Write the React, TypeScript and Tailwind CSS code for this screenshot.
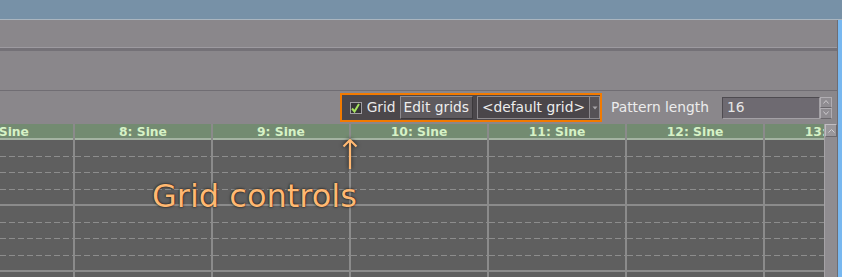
import React from 'react';

const columns = [7, 8, 9, 10, 11, 12, 13];
const rows = ['dash', 'dash', 'dash', 'solid', 'dash', 'dash', 'dash', 'solid', 'dash'];

const GridColumn: React.FC<{ index: number }> = ({ index }) => (
  <div className="w-[138px] shrink-0 flex flex-col border-r-2 border-[#8b8b8b]">
    <div className="h-[20px] pt-[2px] bg-[#738b71] border-b-2 border-[#a4b3a2] flex items-center justify-center text-[12.3px] font-bold text-[#d6f2c6] leading-none">
      {index}: Sine
    </div>
    {rows.map((kind, i) => (
      <div key={i} className="h-[16.5px] shrink-0 flex flex-col justify-end">
        {kind === 'dash' ? (
          <div className="h-px bg-[repeating-linear-gradient(90deg,#8d8d8d_0_6px,transparent_6px_9px)]" />
        ) : (
          <div className="h-[2px] bg-[#8b8b8b]" />
        )}
      </div>
    ))}
  </div>
);

export default function App() {
  return (
    <div className="w-[842px] h-[277px] overflow-hidden flex flex-col bg-[#8a878b] font-['DejaVu_Sans',sans-serif] relative">
      {/* Title strip */}
      <div className="h-[20px] shrink-0 bg-[#7791a7] border-b border-[#aab5bf]" />

      <div className="flex flex-1 min-h-0">
        <div className="w-[838px] flex flex-col border-r border-[#6f6d72]">
          {/* Empty panels */}
          <div className="h-[31px] shrink-0 border-b-[3px] border-[#747177] shadow-[inset_0_-1px_0_#9d9aa0]" />
          <div className="h-[40px] shrink-0 border-b border-[#706d73]" />

          {/* Toolbar */}
          <div className="h-[33px] shrink-0 flex items-center justify-end pr-[5px]">
            <div className="h-[29px] flex items-center border-2 border-[#f27a00] bg-[#4b474b] pl-[8px] pr-0">
              <div className="w-[12px] h-[12px] bg-[#353336] border border-[#a09da2] flex items-center justify-center">
                <svg width="9" height="10" viewBox="0 0 9 10">
                  <path d="M1 5.5 L3.5 8.5 L8 1" fill="none" stroke="#a6e35e" strokeWidth="2" />
                </svg>
              </div>
              <span className="ml-[5px] text-[13.8px] text-[#e9e9e9]">Grid</span>
              <div className="ml-[4px] h-[23px] px-[3px] flex items-center bg-[#5e5a5e] border border-[#3c393c] border-t-[#8d8a8e] border-l-[#8d8a8e] text-[13.8px] text-[#ededed]">
                Edit grids
              </div>
              <div className="ml-[4px] h-[23px] flex items-center border border-[#8b888c] bg-[#4a464a]">
                <span className="pl-[4px] pr-[4px] text-[13.8px] text-[#ededed]">&lt;default grid&gt;</span>
                <div className="w-[10px] h-full border-l border-[#8b888c] bg-[#565256] flex items-center justify-center">
                  <svg width="6" height="4" viewBox="0 0 6 4">
                    <path d="M0.5 0.5 L5.5 0.5 L3 3.5 Z" fill="#a7a4a8" />
                  </svg>
                </div>
              </div>
            </div>
            <span className="ml-[9px] text-[13.8px] text-[#ececec]">Pattern length</span>
            <div className="ml-[13px] flex">
              <div className="w-[98px] h-[22px] flex items-center px-[4px] bg-[#6e6a71] border border-[#4e4b50] border-b-[#a3a0a5] border-r-[#a3a0a5] text-[13.8px] text-[#e6e6e6]">
                16
              </div>
              <div className="w-[12px] h-[22px] flex flex-col">
                <div className="flex-1 flex items-center justify-center bg-[#8f8c91] border border-[#b0adb2] border-b-[#6a676c]">
                  <svg width="6" height="4" viewBox="0 0 6 4">
                    <path d="M0.5 3.5 L3 0.5 L5.5 3.5" fill="none" stroke="#c9c6cb" strokeWidth="1" />
                  </svg>
                </div>
                <div className="flex-1 flex items-center justify-center bg-[#8f8c91] border border-[#b0adb2] border-b-[#6a676c]">
                  <svg width="6" height="4" viewBox="0 0 6 4">
                    <path d="M0.5 0.5 L3 3.5 L5.5 0.5" fill="none" stroke="#c9c6cb" strokeWidth="1" />
                  </svg>
                </div>
              </div>
            </div>
          </div>

          {/* Pattern grid */}
          <div className="flex flex-1 min-h-0">
            <div className="flex-1 overflow-hidden bg-[#5f5f5f]">
              <div className="flex ml-[-63px] h-full">
                {columns.map((c) => (
                  <GridColumn key={c} index={c} />
                ))}
              </div>
            </div>
            <div className="w-[13px] shrink-0 bg-[#8f8c90] border-l border-[#a5a2a6] flex flex-col">
              <div className="h-[13px] flex items-center justify-center bg-[#9a979b] border border-[#c0bdc1] border-b-[#6c696d] border-r-[#6c696d]">
                <svg width="7" height="4" viewBox="0 0 7 4">
                  <path d="M0.5 3.5 L3.5 0.5 L6.5 3.5" fill="none" stroke="#d0cdd1" strokeWidth="1" />
                </svg>
              </div>
            </div>
          </div>
        </div>
        <div className="flex-1 bg-[#78b8f0]" />
      </div>

      {/* Annotation overlay */}
      <svg
        className="absolute left-[341px] top-[138px] drop-shadow-[0_0_2px_rgba(0,0,0,0.8)]"
        width="18"
        height="33"
        viewBox="0 0 18 33"
      >
        <path d="M9 2 L9 31 M2.5 8.5 L9 2 L15.5 8.5" fill="none" stroke="#ffb872" strokeWidth="2.2" />
      </svg>
      <div className="absolute left-[152px] top-[180px] text-[32px] leading-none text-[#ffb872] [text-shadow:0_0_3px_rgba(0,0,0,0.7),0_0_1px_rgba(0,0,0,0.8)]">
        Grid controls
      </div>
    </div>
  );
}
